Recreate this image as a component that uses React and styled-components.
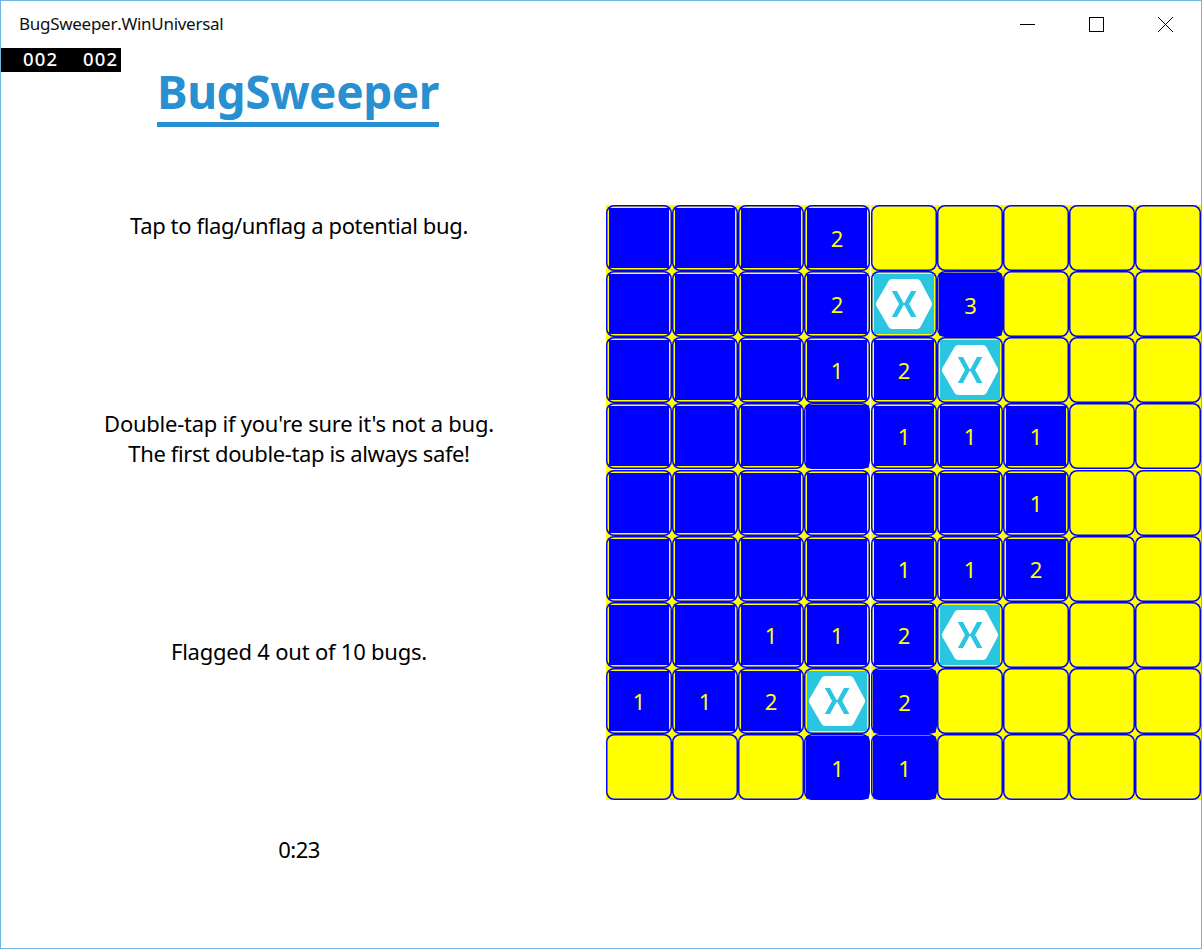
import React from "react";
import styled, { createGlobalStyle, css } from "styled-components";

const BLUE = "#0000ff";
const YELLOW = "#ffff00";
const TEAL = "#2ac5e0";

const GlobalStyle = createGlobalStyle`
  *, *::before, *::after { box-sizing: border-box; }
  body {
    margin: 0;
    background: #fff;
    color: #000;
    font-family: "Noto Sans", "Open Sans", sans-serif;
  }
`;

const Window = styled.main`
  display: flex;
  flex-direction: column;
  width: 1202px;
  height: 949px;
  border: 1px solid #6cb6e8;
  background: #fff;
  overflow: hidden;
`;

const TitleBar = styled.header`
  display: flex;
  flex: none;
  align-items: center;
  justify-content: space-between;
  height: 47px;
  padding: 0 1px 0 18px;
`;

const WindowTitle = styled.span`
  padding-bottom: 1px;
  font-size: 17px;
  font-kerning: none;
  letter-spacing: -0.28px;
  line-height: 24px;
  color: #111;
`;

const WindowButtons = styled.div`
  display: flex;
  height: 100%;
`;

const WindowButton = styled.button`
  display: flex;
  align-items: center;
  justify-content: center;
  width: 69px;
  height: 100%;
  padding: 0;
  border: 0;
  background: none;

  svg { display: block; }
`;

const Content = styled.div`
  display: flex;
  flex: 1;
  min-height: 0;
  position: relative;
`;

const FrameCounter = styled.div`
  position: absolute;
  top: 0;
  left: 0;
  display: flex;
  justify-content: flex-end;
  gap: 24px;
  width: 120px;
  height: 24px;
  padding-right: 2px;
  background: #000;
  color: #fff;
  font-size: 18.5px;
  font-weight: 500;
  line-height: 22px;
  letter-spacing: 1.2px;

  span { width: 36px; }
`;

const InfoPane = styled.section`
  display: flex;
  flex-direction: column;
  align-items: center;
  flex: none;
  width: 595px;
  padding-top: 13px;
`;

const Heading = styled.h1`
  margin: 0 0 0 -1px;
  height: 66px;
  border-bottom: 5px solid #288fd0;
  color: #288fd0;
  font-size: 46px;
  font-weight: 700;
  line-height: 60px;
  letter-spacing: -0.43px;
`;

const Messages = styled.div`
  display: flex;
  flex: 1;
  flex-direction: column;
  justify-content: space-around;
  width: 100%;
  margin-top: -1px;
  padding-left: 1px;
`;

const Message = styled.p`
  margin: 0;
  font-size: 22px;
  line-height: 30px;
  text-align: center;
`;

const Line = styled.span`
  display: block;
  letter-spacing: ${(p) => p.$tracking}px;
`;

const BoardPane = styled.section`
  display: flex;
  flex: none;
  align-self: center;
  padding: 9px 0 0 10px;
`;

const Board = styled.div`
  display: flex;
  flex-direction: column;
  width: 595px;
`;

const BoardRow = styled.div`
  display: flex;
  height: 66px;
  margin-bottom: ${(p) => (p.$seam ? "1px" : "0")};
`;

const Cell = styled.div`
  display: flex;
  flex: none;
  width: 66px;
  height: 66px;
  margin-right: ${(p) => (p.$seam ? "1px" : "0")};
  padding: ${(p) => (p.$flush ? "2px 1px 1px 2px" : "3px")};
  background: ${YELLOW};
  position: relative;

  &::before {
    content: "";
    position: absolute;
    inset: 0;
    border-radius: 8px;
    box-shadow: inset 0 0 0 1.5px ${BLUE};
  }
`;

const CellFace = styled.div`
  display: flex;
  align-items: center;
  justify-content: center;
  position: relative;
  width: 100%;
  height: 100%;
  background: ${(p) => (p.$flag ? TEAL : BLUE)};
  color: ${YELLOW};
  font-size: 22px;
  line-height: 30px;

  ${(p) =>
    p.$flush &&
    css`
      border-radius: 2px;
    `}

  svg { display: block; }
`;

const Logo = () => (
  <svg width="60" height="60" viewBox="0 0 60 60">
    <path
      fill="#fff"
      d="M18.2 5H42.8Q45.2 5 46.4 7L57.6 28Q58.8 30 57.6 32L46.4 53Q45.2 55 42.8 55H18.2Q15.8 55 14.6 53L2.4 32Q1.2 30 2.4 28L14.6 7Q15.8 5 18.2 5Z"
    />
    <path
      fill={TEAL}
      d="M17.8 17H23L29.4 28.7Q30 29.4 30.6 28.7L37 17H42.4L35.2 30L42.4 43H37L30.6 31.3Q30 30.6 29.4 31.3L23 43H17.8L25 30Z"
    />
  </svg>
);

// "." hidden, "0" revealed and empty, digits revealed, "F" flagged.
const board = [
  "0002.....",
  "0002F3...",
  "00012F...",
  "0000111..",
  "0000001..",
  "0000112..",
  "00112F...",
  "112F2....",
  "...11....",
];

// Cells whose face covers the inner rim of the frame, as "row,column".
const flushCells = new Set(["1,5", "3,3", "7,4", "8,3", "8,4"]);

const BoardCell = ({ value, flush, seam }) => (
  <Cell $flush={flush} $seam={seam}>
    {value !== "." && (
      <CellFace $flush={flush} $flag={value === "F"}>
        {value === "F" ? <Logo /> : value !== "0" && value}
      </CellFace>
    )}
  </Cell>
);

export default function App() {
  return (
    <>
      <GlobalStyle />
      <Window>
        <TitleBar>
          <WindowTitle>BugSweeper.WinUniversal</WindowTitle>
          <WindowButtons>
            <WindowButton aria-label="Minimize">
              <svg width="15" height="15" shapeRendering="crispEdges">
                <path d="M0 7.5H15" stroke="#000" />
              </svg>
            </WindowButton>
            <WindowButton aria-label="Maximize">
              <svg width="15" height="15" shapeRendering="crispEdges">
                <rect x="0.5" y="0.5" width="14" height="14" fill="none" stroke="#000" />
              </svg>
            </WindowButton>
            <WindowButton aria-label="Close">
              <svg width="15" height="15">
                <path d="M0 0L15 15M15 0L0 15" stroke="#000" />
              </svg>
            </WindowButton>
          </WindowButtons>
        </TitleBar>
        <Content>
          <InfoPane>
            <Heading>BugSweeper</Heading>
            <Messages>
              <Message>
                <Line $tracking={-0.38}>Tap to flag/unflag a potential bug.</Line>
              </Message>
              <Message>
                <Line $tracking={-0.25}>Double-tap if you're sure it's not a bug.</Line>
                <Line $tracking={-0.38}>The first double-tap is always safe!</Line>
              </Message>
              <Message>
                <Line $tracking={-0.22}>Flagged 4 out of 10 bugs.</Line>
              </Message>
              <Message>
                <Line $tracking={-0.5}>0:23</Line>
              </Message>
            </Messages>
          </InfoPane>
          <BoardPane>
            <Board>
              {board.map((row, r) => (
                <BoardRow key={r} $seam={r === 3}>
                  {[...row].map((value, c) => (
                    <BoardCell
                      key={c}
                      value={value}
                      flush={flushCells.has(`${r},${c}`)}
                      seam={c === 3}
                    />
                  ))}
                </BoardRow>
              ))}
            </Board>
          </BoardPane>
          <FrameCounter>
            <span>002</span>
            <span>002</span>
          </FrameCounter>
        </Content>
      </Window>
    </>
  );
}
